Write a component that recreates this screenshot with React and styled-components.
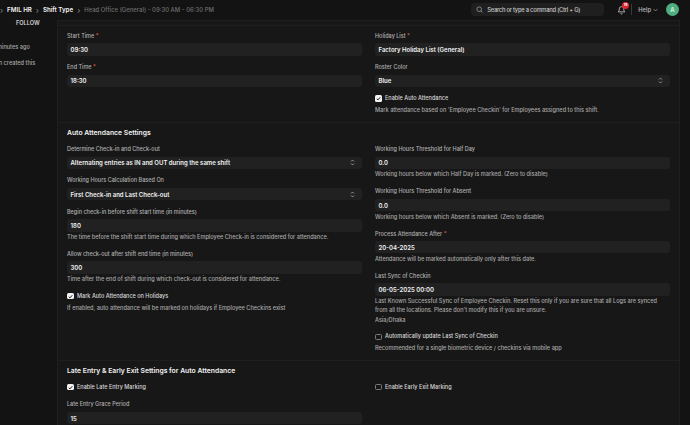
import React from "react";
import styled, { createGlobalStyle } from "styled-components";

const GlobalStyle = createGlobalStyle`
  html, body {
    margin: 0;
    padding: 0;
    background: #111111;
    overflow: hidden;
  }
  body {
    font-family: Inter, "Liberation Sans", sans-serif;
  }
`;

const App = () => {
  return (
    <Page>
      <GlobalStyle />
      <Header>
        <Crumbs>
          <Chevron>›</Chevron>
          <Crumb>FMIL HR</Crumb>
          <Chevron>›</Chevron>
          <Crumb>Shift Type</Crumb>
          <Chevron>›</Chevron>
          <CrumbTitle>Head Office (General) - 09:30 AM - 06:30 PM</CrumbTitle>
        </Crumbs>
        <Search>
          <svg width="7" height="7" viewBox="0 0 24 24" fill="none" stroke="#c4c4c4" strokeWidth="2">
            <circle cx="11" cy="11" r="8" />
            <path d="M17 17l5 5" />
          </svg>
          <span>Search or type a command (Ctrl + G)</span>
        </Search>
        <Bell>
          <svg width="9" height="10" viewBox="0 0 24 24" fill="none" stroke="#d8d8d8" strokeWidth="2">
            <path d="M6 9a6 6 0 0 1 12 0c0 7 3 8 3 8H3s3-1 3-8" />
            <path d="M10 21a2 2 0 0 0 4 0" />
          </svg>
          <Badge>19</Badge>
        </Bell>
        <Divider />
        <Help>
          Help
          <svg width="5" height="4" viewBox="0 0 10 8" fill="none" stroke="#bdbdbd" strokeWidth="1.2">
            <path d="M1 2l4 4 4-4" />
          </svg>
        </Help>
        <Avatar>A</Avatar>
      </Header>
      <Body>
        <Sidebar>
          <Follow>FOLLOW</Follow>
          <Activity $shift={-3}>minutes ago</Activity>
          <Activity $shift={-15}>Admin created this</Activity>
        </Sidebar>
        <Card>
          <Section $height={97} $pad={7}>
            <Column>
              <Field label="Start Time" required value="09:30" />
              <Field label="End Time" required value="18:30" />
            </Column>
            <Column>
              <Field label="Holiday List" required value="Factory Holiday List (General)" />
              <Field label="Roster Color" value="Blue" select />
              <Check label="Enable Auto Attendance" checked help="Mark attendance based on 'Employee Checkin' for Employees assigned to this shift." />
            </Column>
          </Section>
          <Section $height={238} $pad={4.5}>
            <Title>Auto Attendance Settings</Title>
            <Column>
              <Field label="Determine Check-in and Check-out" value="Alternating entries as IN and OUT during the same shift" select />
              <Field label="Working Hours Calculation Based On" value="First Check-in and Last Check-out" select />
              <Field label="Begin check-in before shift start time (in minutes)" value="180" help="The time before the shift start time during which Employee Check-in is considered for attendance." />
              <Field label="Allow check-out after shift end time (in minutes)" value="300" help="Time after the end of shift during which check-out is considered for attendance." />
              <Check label="Mark Auto Attendance on Holidays" checked help="If enabled, auto attendance will be marked on holidays if Employee Checkins exist" />
            </Column>
            <Column>
              <Field label="Working Hours Threshold for Half Day" value="0.0" help="Working hours below which Half Day is marked. (Zero to disable)" />
              <Field label="Working Hours Threshold for Absent" value="0.0" help="Working hours below which Absent is marked. (Zero to disable)" />
              <Field label="Process Attendance After" required value="20-04-2025" help="Attendance will be marked automatically only after this date." />
              <Field
                label="Last Sync of Checkin"
                value="06-05-2025 00:00"
                help={
                  <>
                    Last Known Successful Sync of Employee Checkin. Reset this only if you are sure that all Logs are synced
                    from all the locations. Please don't modify this if you are unsure.
                    <br />
                    Asia/Dhaka
                  </>
                }
              />
              <Check label="Automatically update Last Sync of Checkin" help="Recommended for a single biometric device / checkins via mobile app" />
            </Column>
          </Section>
          <Section $height={66} $pad={4.5}>
            <Title>Late Entry &amp; Early Exit Settings for Auto Attendance</Title>
            <Column>
              <Check label="Enable Late Entry Marking" checked spaced />
              <Field label="Late Entry Grace Period" value="15" />
            </Column>
            <Column>
              <Check label="Enable Early Exit Marking" />
            </Column>
          </Section>
        </Card>
      </Body>
    </Page>
  );
};

const Field = ({ label, required, value, select, help }) => (
  <FieldWrap>
    <Label>
      {label}
      {required && <Star> *</Star>}
    </Label>
    <Input>
      <span>{value}</span>
      {select && (
        <svg width="5" height="7" viewBox="0 0 10 14" fill="none" stroke="#c0c0c0" strokeWidth="1.4">
          <path d="M2 5l3-3 3 3M2 9l3 3 3-3" />
        </svg>
      )}
    </Input>
    {help && <FieldHelp>{help}</FieldHelp>}
  </FieldWrap>
);

const Check = ({ label, checked, help, spaced }) => (
  <CheckWrap $spaced={spaced}>
    <CheckRow>
      <Box $checked={checked}>
        {checked && (
          <svg width="5" height="5" viewBox="0 0 10 10" fill="none" stroke="#171717" strokeWidth="2">
            <path d="M1.5 5.5l2.3 2.3L8.5 2.5" />
          </svg>
        )}
      </Box>
      <CheckLabel>{label}</CheckLabel>
    </CheckRow>
    {help && <CheckHelp>{help}</CheckHelp>}
  </CheckWrap>
);

const Page = styled.div`
  width: 690px;
  height: 425px;
  overflow: hidden;
  background: #131313;
  color: #f0f0f0;
`;

const Header = styled.header`
  height: 20px;
  display: flex;
  align-items: center;
  padding: 0 11px 1px 0;
  box-sizing: border-box;
  background: #131313;
`;

const Crumbs = styled.nav`
  display: flex;
  align-items: center;
  gap: 4px;
  flex: 1;
  font-size: 6.2px;
`;

const Chevron = styled.span`
  color: #8a8a8a;
  font-size: 8px;
  line-height: 8px;
`;

const Crumb = styled.span`
  color: #f2f2f2;
  font-weight: 600;
`;

const CrumbTitle = styled.span`
  color: #6f6f6f;
  font-size: 5.95px;
  font-weight: 500;
`;

const Search = styled.div`
  width: 133px;
  height: 12.5px;
  display: flex;
  align-items: center;
  gap: 4px;
  padding-left: 5px;
  box-sizing: border-box;
  border-radius: 4px;
  background: #1f1f1f;
  color: #c9c9c9;
  font-size: 5.8px;
  letter-spacing: -0.25px;
  font-weight: 500;
`;

const Bell = styled.div`
  position: relative;
  width: 9px;
  height: 10px;
  margin-left: 13px;
  display: flex;
`;

const Badge = styled.span`
  position: absolute;
  top: -3px;
  right: -3px;
  width: 7px;
  height: 7px;
  border-radius: 50%;
  background: #e0242c;
  color: #fff;
  font-size: 3.5px;
  font-weight: 700;
  line-height: 7px;
  text-align: center;
`;

const Divider = styled.div`
  width: 1px;
  height: 11px;
  margin-left: 5px;
  background: #3a3a3a;
`;

const Help = styled.div`
  display: flex;
  align-items: center;
  gap: 2px;
  margin-left: 6px;
  color: #bdbdbd;
  font-size: 5.8px;
  font-weight: 500;
`;

const Avatar = styled.div`
  width: 13px;
  height: 13px;
  margin-left: 8px;
  border-radius: 50%;
  background: #4fae7f;
  color: #d9f5e6;
  font-size: 6px;
  font-weight: 600;
  line-height: 13px;
  text-align: center;
`;

const Body = styled.main`
  display: flex;
  height: 405px;
`;

const Sidebar = styled.aside`
  width: 57px;
  flex: none;
  overflow: hidden;
  font-size: 5.6px;
  font-weight: 500;
  color: #a8a8a8;
`;

const Follow = styled.div`
  margin: 0 0 18px 16px;
  height: 6px;
  line-height: 6px;
  color: #d2d2d2;
  font-weight: 600;
`;

const Activity = styled.div`
  margin: 0 0 8px ${({ $shift }) => $shift}px;
  height: 7.5px;
  line-height: 7.5px;
  white-space: nowrap;
`;

const Card = styled.div`
  width: 622.5px;
  flex: none;
  padding-top: 4px;
  background: #171717;
  border-top: 1px solid #1f1f1f;
  border-left: 1px solid #1f1f1f;
  border-right: 1px solid #1f1f1f;
  box-sizing: border-box;
`;

const Section = styled.section`
  height: ${({ $height }) => $height}px;
  display: grid;
  grid-template-columns: 295px 295px;
  grid-auto-rows: min-content;
  column-gap: 13px;
  align-content: start;
  padding: ${({ $pad }) => $pad}px 9px 0;
  box-sizing: border-box;
  border-top: 1px solid #1f1f1f;
`;

const Title = styled.h3`
  grid-column: 1 / -1;
  margin: 0 0 9.7px;
  font-size: 6.8px;
  line-height: 9px;
  font-weight: 600;
  color: #f2f2f2;
`;

const Column = styled.div`
  display: flex;
  flex-direction: column;
  gap: 8.4px;
`;

const FieldWrap = styled.div`
  display: flex;
  flex-direction: column;
`;

const Label = styled.label`
  font-size: 5.5px;
  line-height: 7px;
  font-weight: 500;
  color: #b0b0b0;
  margin-bottom: 3.4px;
`;

const Star = styled.span`
  color: #d8574f;
`;

const Input = styled.div`
  height: 12.5px;
  flex: none;
  display: flex;
  align-items: center;
  justify-content: space-between;
  padding: 0 7px 0 3.5px;
  border-radius: 3px;
  background: #212121;
  color: #f2f2f2;
  font-size: 6px;
  font-weight: 600;
`;

const FieldHelp = styled.div`
  margin-top: 1.4px;
  font-size: 5.6px;
  line-height: 9.5px;
  font-weight: 500;
  color: #a8a8a8;
`;

const CheckWrap = styled.div`
  display: flex;
  flex-direction: column;
  gap: 5px;
  margin-top: -0.5px;
  margin-bottom: ${({ $spaced }) => ($spaced ? "2.3px" : "0")};
`;

const CheckRow = styled.div`
  display: flex;
  align-items: center;
  gap: 3.5px;
  height: 7px;
`;

const Box = styled.span`
  width: 6.5px;
  height: 6.5px;
  flex: none;
  display: flex;
  align-items: center;
  justify-content: center;
  box-sizing: border-box;
  border-radius: 1.5px;
  background: ${({ $checked }) => ($checked ? "#f2f2f2" : "transparent")};
  border: ${({ $checked }) => ($checked ? "none" : "0.7px solid #7a7a7a")};
`;

const CheckLabel = styled.span`
  font-size: 5.5px;
  line-height: 7px;
  font-weight: 500;
  color: #d8d8d8;
`;

const CheckHelp = styled.div`
  font-size: 5.6px;
  line-height: 7px;
  font-weight: 500;
  color: #a8a8a8;
`;

export default App;
